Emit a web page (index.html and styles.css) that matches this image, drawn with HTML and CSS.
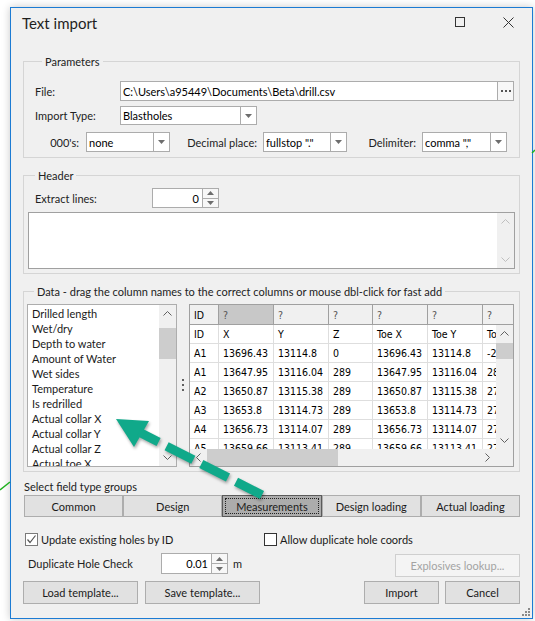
FILE: index.html
```html
<!DOCTYPE html>
<html>
<head>
<meta charset="utf-8">
<title>Text import</title>
<link rel="stylesheet" href="styles.css">
</head>
<body>
<div class="window">
  <div class="titlebar">
    <div class="title">Text import</div>
    <div class="caps">
      <span class="cap"><svg width="10" height="10" viewBox="0 0 10 10"><rect x="0.5" y="0.5" width="9" height="9" fill="none" stroke="#333"/></svg></span>
      <span class="cap"><svg width="11" height="11" viewBox="0 0 11 11"><path d="M0.5 0.5L10.5 10.5M10.5 0.5L0.5 10.5" stroke="#333" fill="none"/></svg></span>
    </div>
  </div>

  <div class="content">
    <fieldset class="group g-params">
      <legend>Parameters</legend>
      <div class="row r-file">
        <span class="lbl lbl-main">File:</span>
        <div class="tbox file-box"><span class="ctext">C:\Users\a95449\Documents\Beta\drill.csv</span></div>
        <div class="browse"><i></i><i></i><i></i></div>
      </div>
      <div class="row r-type">
        <span class="lbl lbl-main">Import Type:</span>
        <div class="combo c-import"><span class="ctext">Blastholes</span><span class="cbtn"><svg width="7" height="4" viewBox="0 0 7 4"><path d="M0 0H7L3.5 4Z" fill="#6d6d6d"/></svg></span></div>
      </div>
      <div class="row r-three">
        <span class="lbl lbl-000">000's:</span>
        <div class="combo c-000"><span class="ctext">none</span><span class="cbtn"><svg width="7" height="4" viewBox="0 0 7 4"><path d="M0 0H7L3.5 4Z" fill="#6d6d6d"/></svg></span></div>
        <span class="lbl lbl-dec">Decimal place:</span>
        <div class="combo c-dec"><span class="ctext">fullstop "."</span><span class="cbtn"><svg width="7" height="4" viewBox="0 0 7 4"><path d="M0 0H7L3.5 4Z" fill="#6d6d6d"/></svg></span></div>
        <span class="lbl lbl-del">Delimiter:</span>
        <div class="combo c-del"><span class="ctext">comma ","</span><span class="cbtn"><svg width="7" height="4" viewBox="0 0 7 4"><path d="M0 0H7L3.5 4Z" fill="#6d6d6d"/></svg></span></div>
      </div>
    </fieldset>

    <fieldset class="group g-header">
      <legend>Header</legend>
      <div class="row r-extract">
        <span class="lbl lbl-extract">Extract lines:</span>
        <div class="spin spin-ex">
          <span class="val">0</span>
          <span class="sbtns">
            <span><svg width="7" height="4" viewBox="0 0 7 4"><path d="M0 4H7L3.5 0Z" fill="#6d6d6d"/></svg></span>
            <span><svg width="7" height="4" viewBox="0 0 7 4"><path d="M0 0H7L3.5 4Z" fill="#6d6d6d"/></svg></span>
          </span>
        </div>
      </div>
      <div class="memo">
        <div class="vs vs-off">
          <span class="arr"><svg width="9" height="5" viewBox="0 0 9 5"><polyline points="0.5,4.5 4.5,0.5 8.5,4.5" fill="none" stroke="#bfbfbf"/></svg></span>
          <span class="arr"><svg width="9" height="5" viewBox="0 0 9 5"><polyline points="0.5,0.5 4.5,4.5 8.5,0.5" fill="none" stroke="#bfbfbf"/></svg></span>
        </div>
      </div>
    </fieldset>

    <fieldset class="group g-data">
      <legend>Data - drag the column names to the correct columns or mouse dbl-click for fast add</legend>
      <div class="data-row">
        <div class="list">
          <div class="items">
            <div>Drilled length</div>
            <div>Wet/dry</div>
            <div>Depth to water</div>
            <div>Amount of Water</div>
            <div>Wet sides</div>
            <div>Temperature</div>
            <div>Is redrilled</div>
            <div>Actual collar X</div>
            <div>Actual collar Y</div>
            <div>Actual collar Z</div>
            <div>Actual toe X</div>
          </div>
          <div class="vs list-vs">
            <span class="arr"><svg width="9" height="5" viewBox="0 0 9 5"><polyline points="0.5,4.5 4.5,0.5 8.5,4.5" fill="none" stroke="#606060"/></svg></span>
            <span class="track"><span class="thumb list-thumb"></span></span>
            <span class="arr"><svg width="9" height="5" viewBox="0 0 9 5"><polyline points="0.5,0.5 4.5,4.5 8.5,0.5" fill="none" stroke="#606060"/></svg></span>
          </div>
        </div>
        <div class="splitter"><i></i><i></i><i></i></div>
        <div class="grid">
          <div class="ghead">
            <span class="gc w-id">ID</span><span class="gc w-n sel q">?</span><span class="gc w-n q">?</span><span class="gc w-z q">?</span><span class="gc w-n q">?</span><span class="gc w-n q">?</span><span class="gc w-last q">?</span>
          </div>
          <div class="gbody">
            <div class="gview">
              <div class="grow"><span class="gc w-id">ID</span><span class="gc w-n">X</span><span class="gc w-n">Y</span><span class="gc w-z">Z</span><span class="gc w-n">Toe X</span><span class="gc w-n">Toe Y</span><span class="gc w-n">Toe Z</span></div>
              <div class="grow"><span class="gc w-id">A1</span><span class="gc w-n">13696.43</span><span class="gc w-n">13114.8</span><span class="gc w-z">0</span><span class="gc w-n">13696.43</span><span class="gc w-n">13114.8</span><span class="gc w-n">-20</span></div>
              <div class="grow"><span class="gc w-id">A1</span><span class="gc w-n">13647.95</span><span class="gc w-n">13116.04</span><span class="gc w-z">289</span><span class="gc w-n">13647.95</span><span class="gc w-n">13116.04</span><span class="gc w-n">280</span></div>
              <div class="grow"><span class="gc w-id">A2</span><span class="gc w-n">13650.87</span><span class="gc w-n">13115.38</span><span class="gc w-z">289</span><span class="gc w-n">13650.87</span><span class="gc w-n">13115.38</span><span class="gc w-n">274</span></div>
              <div class="grow"><span class="gc w-id">A3</span><span class="gc w-n">13653.8</span><span class="gc w-n">13114.73</span><span class="gc w-z">289</span><span class="gc w-n">13653.8</span><span class="gc w-n">13114.73</span><span class="gc w-n">274</span></div>
              <div class="grow"><span class="gc w-id">A4</span><span class="gc w-n">13656.73</span><span class="gc w-n">13114.07</span><span class="gc w-z">289</span><span class="gc w-n">13656.73</span><span class="gc w-n">13114.07</span><span class="gc w-n">274</span></div>
              <div class="grow"><span class="gc w-id">A5</span><span class="gc w-n">13659.66</span><span class="gc w-n">13113.41</span><span class="gc w-z">289</span><span class="gc w-n">13659.66</span><span class="gc w-n">13113.41</span><span class="gc w-n">274</span></div>
            </div>
            <div class="vs grid-vs">
              <span class="arr"><svg width="9" height="5" viewBox="0 0 9 5"><polyline points="0.5,4.5 4.5,0.5 8.5,4.5" fill="none" stroke="#606060"/></svg></span>
              <span class="track"><span class="thumb grid-thumb"></span></span>
              <span class="arr"><svg width="9" height="5" viewBox="0 0 9 5"><polyline points="0.5,0.5 4.5,4.5 8.5,0.5" fill="none" stroke="#606060"/></svg></span>
            </div>
          </div>
          <div class="hbar">
            <div class="hs">
              <span class="harr"><svg width="5" height="9" viewBox="0 0 5 9"><polyline points="4.5,0.5 0.5,4.5 4.5,8.5" fill="none" stroke="#606060"/></svg></span>
              <span class="htrack"><span class="hthumb"></span></span>
              <span class="harr"><svg width="5" height="9" viewBox="0 0 5 9"><polyline points="0.5,0.5 4.5,4.5 0.5,8.5" fill="none" stroke="#606060"/></svg></span>
            </div>
            <div class="corner"></div>
          </div>
        </div>
      </div>
    </fieldset>

    <div class="sel-label">Select field type groups</div>
    <div class="groups">
      <span class="btn">Common</span>
      <span class="btn">Design</span>
      <span class="btn pressed"><span class="focus">Measurements</span></span>
      <span class="btn">Design loading</span>
      <span class="btn">Actual loading</span>
    </div>

    <div class="checks">
      <label class="chk"><span class="box box-on"><svg width="11" height="11" viewBox="0 0 11 11"><polyline points="1.5,5.5 4,8.5 9.5,1.5" fill="none" stroke="#555" stroke-width="1.2"/></svg></span>Update existing holes by ID</label>
      <label class="chk"><span class="box box-off"></span>Allow duplicate hole coords</label>
    </div>

    <div class="row r-dup">
      <span class="lbl lbl-dup">Duplicate Hole Check</span>
      <div class="spin spin-dup">
        <span class="val">0.01</span>
        <span class="sbtns">
          <span><svg width="7" height="4" viewBox="0 0 7 4"><path d="M0 4H7L3.5 0Z" fill="#6d6d6d"/></svg></span>
          <span><svg width="7" height="4" viewBox="0 0 7 4"><path d="M0 0H7L3.5 4Z" fill="#6d6d6d"/></svg></span>
        </span>
      </div>
      <span class="unit">m</span>
      <span class="btn btn-dis">Explosives lookup...</span>
    </div>

    <div class="row r-bottom">
      <span class="btn btn-tpl">Load template...</span>
      <span class="btn btn-tpl">Save template...</span>
      <span class="spacer"></span>
      <span class="btn btn-ok">Import</span>
      <span class="btn btn-ok">Cancel</span>
    </div>
  </div>
</div>

<svg class="overlay" width="535" height="621" viewBox="0 0 535 621">
  <line x1="0" y1="490" x2="10" y2="482" stroke="#1fb11f" stroke-width="1.5"/>
  <line x1="532" y1="153" x2="535" y2="150" stroke="#1fb11f" stroke-width="1.5"/>
  <g class="grip" fill="#8a8a8a">
    <rect x="528" y="608" width="2" height="2"/>
    <rect x="525" y="611" width="2" height="2"/>
    <rect x="528" y="611" width="2" height="2"/>
    <rect x="522" y="614" width="2" height="2"/>
    <rect x="525" y="614" width="2" height="2"/>
    <rect x="528" y="614" width="2" height="2"/>
  </g>
  <g class="arrow">
    <polygon points="116,419 149,421 134,447" fill="#10a98a"/>
    <line x1="139" y1="432" x2="262" y2="495" stroke="#10a98a" stroke-width="9" stroke-dasharray="22 9 30 9 30 9 40"/>
  </g>
</svg>
</body>
</html>
```

FILE: styles.css
```css
* { box-sizing: border-box; }
html, body { margin: 0; padding: 0; }
body {
  width: 535px;
  height: 621px;
  position: relative;
  overflow: hidden;
  background: #ffffff;
  font-family: Lato, "Noto Sans", sans-serif;
  font-size: 11px;
  color: #222;
}

.window {
  margin: 7px 0 0 10px;
  width: 523px;
  height: 612px;
  border: 1px solid #1c7bd3;
  background: #f0f0f0;
  box-shadow: 0 0 8px rgba(0, 0, 0, 0.22);
  display: flex;
  flex-direction: column;
}

.titlebar { height: 30px; flex: none; display: flex; justify-content: space-between; }
.title { font-size: 15px; line-height: 30px; padding-left: 11px; color: #1e1e1e; }
.caps { display: flex; }
.cap { width: 48px; height: 30px; display: flex; justify-content: center; padding-top: 9px; }

.content { flex: 1; display: flex; flex-direction: column; padding: 16px 12px 0 12px; }

.group { margin: 0; padding: 0; border: 1px solid #d5d5d5; min-width: 0; }
.group legend { margin-left: 7px; padding: 0 3px; line-height: 15px; height: 15px; color: #222; white-space: nowrap; }

.row { display: flex; align-items: center; }
.lbl { white-space: nowrap; color: #222; }

/* Parameters */
.g-params { padding: 12px 5px 5px 11px; }
.r-file { height: 20px; }
.r-type { height: 19px; margin-top: 5px; }
.r-three { height: 20px; margin-top: 7px; }
.lbl-main { width: 85px; }
.lbl-000 { width: 44px; text-align: right; }
.lbl-dec { width: 87px; text-align: right; }
.lbl-del { width: 69px; text-align: right; }

.tbox, .combo { height: 100%; display: flex; border: 1px solid #acacac; background: #fff; color: #000; }
.file-box { flex: 1; }
.ctext { flex: 1; padding-left: 2px; white-space: nowrap; overflow: hidden; display: flex; align-items: center; }
.cbtn { width: 16px; flex: none; border-left: 1px solid #acacac; display: flex; align-items: center; justify-content: center; }
.c-import { width: 137px; }
.c-000 { width: 84px; margin-left: 7px; }
.c-dec { width: 84px; margin-left: 6px; }
.c-del { width: 85px; margin-left: 6px; }

.browse { width: 17px; height: 100%; margin-left: -1px; border: 1px solid #acacac; background: #f7f7f7; display: flex; align-items: center; justify-content: center; gap: 2px; }
.browse i { width: 2px; height: 2px; background: #555; }

/* Header */
.g-header { margin-top: 10px; padding: 5px 4px 4px 4px; }
.r-extract { height: 20px; padding-left: 7px; }
.lbl-extract { width: 117px; }
.spin { display: flex; border: 1px solid #acacac; background: #fff; color: #000; }
.spin-ex { width: 67px; height: 20px; }
.spin .val { flex: 1; text-align: right; padding-right: 3px; display: flex; align-items: center; justify-content: flex-end; }
.sbtns { width: 16px; flex: none; border-left: 1px solid #acacac; display: flex; flex-direction: column; }
.sbtns span { flex: 1; display: flex; align-items: center; justify-content: center; background: #f7f7f7; }
.sbtns span + span { border-top: 1px solid #acacac; }

.memo { margin-top: 4px; height: 57px; border: 1px solid #a0a0a0; background: #fff; display: flex; justify-content: flex-end; }

.vs { width: 17px; flex: none; background: #f0f0f0; display: flex; flex-direction: column; }
.vs-off { justify-content: space-between; }
.arr { height: 17px; flex: none; display: flex; align-items: center; justify-content: center; }
.track { flex: 1; display: flex; flex-direction: column; }
.thumb { display: block; background: #cdcdcd; }

/* Data */
.g-data { margin-top: 10px; padding: 5px 5px 4px 3px; }
.data-row { display: flex; height: 163px; }
.list { width: 150px; border: 1px solid #adadad; background: #fff; display: flex; overflow: hidden; }
.items { flex: 1; padding: 1px 0 0 4px; overflow: hidden; color: #1a1a1a; }
.items div { height: 15px; line-height: 15px; white-space: nowrap; }
.list-thumb { margin-top: 6px; height: 31px; }

.splitter { width: 12px; display: flex; flex-direction: column; align-items: center; justify-content: center; gap: 3px; padding-bottom: 2px; }
.splitter i { width: 2px; height: 2px; background: #606060; }

.grid { width: 325px; border: 1px solid #a0a0a0; background: #fff; display: flex; flex-direction: column; overflow: hidden;
  font-family: "DejaVu Sans Condensed", "DejaVu Sans", sans-serif; font-stretch: condensed; font-size: 10.5px; color: #000; }
.ghead { height: 20px; flex: none; display: flex; background: #f0f0f0; border-bottom: 1px solid #a0a0a0; }
.gc { flex: none; display: flex; align-items: center; padding-left: 4px; white-space: nowrap; overflow: hidden; }
.ghead .gc { border-right: 1px solid #a0a0a0; }
.ghead .gc.q { color: #555; }
.ghead .gc.sel { background: #c8c8c8; }
.ghead .w-last { flex: 1; border-right: 0; }
.w-id { width: 29px; }
.w-n { width: 55px; }
.w-z { width: 44px; }

.gbody { flex: 1; display: flex; min-height: 0; }
.gview { flex: 1; overflow: hidden; }
.grow { display: flex; height: 19px; }
.grow .gc { border-right: 1px solid #dedede; border-bottom: 1px solid #dedede; }
.grid-thumb { margin-top: 1px; height: 16px; }

.hbar { height: 17px; flex: none; display: flex; }
.hs { flex: 1; display: flex; background: #f0f0f0; }
.harr { width: 17px; flex: none; display: flex; align-items: center; justify-content: center; }
.htrack { flex: 1; display: flex; }
.hthumb { width: 131px; background: #cdcdcd; }
.corner { width: 17px; background: #f0f0f0; }

/* field type groups */
.sel-label { margin-top: 7px; padding-left: 1px; height: 15px; line-height: 15px; }
.groups { margin: 1px 0 0 1px; height: 22px; display: grid; grid-template-columns: repeat(5, 1fr); }
.btn { display: flex; align-items: center; justify-content: center; background: #e1e1e1; border: 1px solid #adadad; color: #1a1a1a; white-space: nowrap; }
.btn.pressed { background: #acacac; border-color: #5a5a5a; padding: 2px; }
.btn .focus { flex: 1; align-self: stretch; display: flex; align-items: center; justify-content: center; border: 1px dotted #222; }

.checks { margin-top: 15px; height: 15px; display: grid; grid-template-columns: 241px 1fr; }
.chk { display: flex; align-items: center; gap: 3px; white-space: nowrap; color: #1a1a1a; }
.chk:first-child { padding-left: 2px; }
.box { width: 13px; height: 13px; flex: none; background: #fff; display: flex; align-items: center; justify-content: center; }
.box-on { border: 1px solid #7a7a7a; }
.box-off { border: 1px solid #333; }

.r-dup { margin-top: 6px; align-items: flex-start; height: 24px; }
.lbl-dup { width: 138px; padding-left: 5px; line-height: 21px; }
.spin-dup { width: 67px; height: 21px; }
.unit { margin-left: 5px; line-height: 21px; }
.btn-dis { margin-left: auto; margin-top: 1px; width: 125px; height: 23px; background: #f4f4f4; border-color: #cfcfcf; color: #a3a3a3; }

.r-bottom { margin-top: 4px; height: 23px; }
.r-bottom .btn { height: 23px; }
.btn-tpl { width: 115px; margin-right: 7px; }
.spacer { flex: 1; }
.btn-ok { width: 75px; margin-left: 6px; }

.overlay { position: absolute; left: 0; top: 0; pointer-events: none; }
.arrow { filter: drop-shadow(1px 2px 1.5px rgba(0, 0, 0, 0.35)); }
```
